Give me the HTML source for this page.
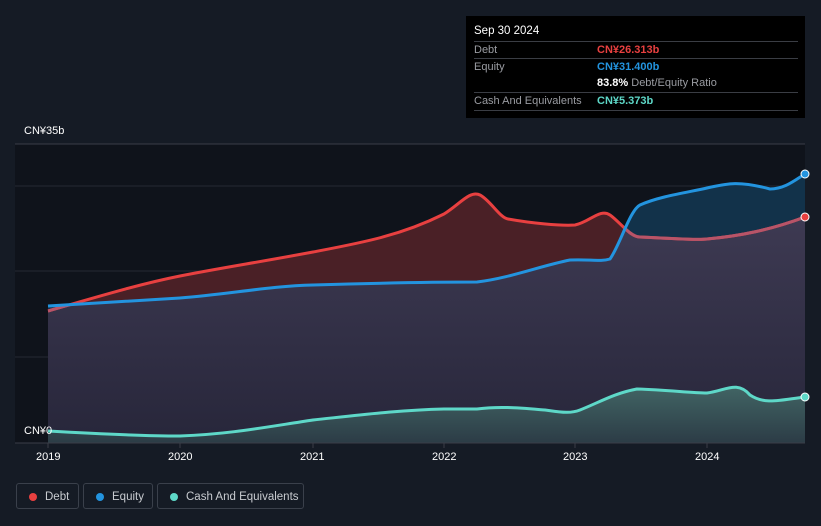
<!DOCTYPE html>
<html><head><style>
body{margin:0;width:821px;height:526px;background:#151b25;font-family:"Liberation Sans",sans-serif;overflow:hidden;position:relative}
.tt{position:absolute;left:466px;top:16px;width:339px;height:102px;background:#000;color:#fff;font-size:11px}
.tt .h{position:absolute;left:8px;top:9px;font-size:11.5px}
.row{position:absolute;left:8px;width:324px;border-top:1px solid #3a3d44;height:17px;line-height:17px;color:#9a9ca2}
.row span{position:absolute;left:123px;font-weight:bold}
.lg{position:absolute;top:483px;height:26px;border:1px solid #3a404b;border-radius:3px;color:#c8cbd0;font-size:11.5px;line-height:26px;box-sizing:border-box}
.lg i{position:absolute;top:9px;width:8px;height:8px;border-radius:50%;left:12px}
.ax{position:absolute;color:#fff;font-size:11px}
</style></head><body>
<svg width="821" height="526" style="position:absolute;left:0;top:0">
<defs>
<clipPath id="eq"><path d="M48,306 C120,302 150,300 180,298 C230,294 270,286 313,285 C380,283 420,282 477,282 C510,278 540,266 570,260 C590,259 600,262 610,259 C620,245 630,210 640,205 C660,196 690,192 707,188 C725,184 737,180 770,189 C785,189 795,180 805,174 L805,443 L48,443Z"/></clipPath>
<linearGradient id="pg" x1="0" y1="0" x2="0" y2="1"><stop offset="0" stop-color="#403c55"/><stop offset="1" stop-color="#27263a"/></linearGradient>
<linearGradient id="cg" x1="0" y1="0" x2="0" y2="1"><stop offset="0" stop-color="#416464"/><stop offset="1" stop-color="#2c3c46"/></linearGradient>
</defs>
<rect x="15" y="144" width="790" height="299" fill="#0f131b"/>
<line x1="15" y1="144" x2="805" y2="144" stroke="#3a3e48"/>
<line x1="15" y1="186" x2="805" y2="186" stroke="#262a33"/>
<line x1="15" y1="271" x2="805" y2="271" stroke="#262a33"/>
<line x1="15" y1="357" x2="805" y2="357" stroke="#262a33"/>
<path d="M48,306 C120,302 150,300 180,298 C230,294 270,286 313,285 C380,283 420,282 477,282 C510,278 540,266 570,260 C590,259 600,262 610,259 C620,245 630,210 640,205 C660,196 690,192 707,188 C725,184 737,180 770,189 C785,189 795,180 805,174 L805,443 L48,443Z" fill="#12324a"/>
<path id="dp" d="M48,311 C100,296 140,284 180,276 C220,268 260,262 313,252 C360,243 400,236 444,214 C460,204 470,190 480,195 C490,200 500,218 508,219 C530,223 560,226 575,225 C590,222 600,208 610,215 C620,222 630,237 640,237 C680,239 700,240 707,239 C740,236 770,230 805,217 L805,443 L48,443Z" fill="#4a2026"/>
<path d="M48,311 C100,296 140,284 180,276 C220,268 260,262 313,252 C360,243 400,236 444,214 C460,204 470,190 480,195 C490,200 500,218 508,219 C530,223 560,226 575,225 C590,222 600,208 610,215 C620,222 630,237 640,237 C680,239 700,240 707,239 C740,236 770,230 805,217 L805,443 L48,443Z" fill="url(#pg)" clip-path="url(#eq)"/>
<path d="M48,431 C100,434 150,436 180,436 C230,434 260,428 313,420 C360,415 400,410 444,409 L477,409 C500,406 520,408 545,410 C560,412 570,414 580,410 C600,402 615,393 637,389 C670,390 690,393 707,393 C725,391 737,380 750,395 C765,405 780,400 805,397 L805,443 L48,443Z" fill="url(#cg)"/>
<path d="M48,311 C100,296 140,284 180,276 C220,268 260,262 313,252 C360,243 400,236 444,214 C460,204 470,190 480,195 C490,200 500,218 508,219 C530,223 560,226 575,225 C590,222 600,208 610,215 C620,222 630,237 640,237 C680,239 700,240 707,239 C740,236 770,230 805,217" fill="none" stroke="#e84040" stroke-width="3"/>
<path d="M48,311 C100,296 140,284 180,276 C220,268 260,262 313,252 C360,243 400,236 444,214 C460,204 470,190 480,195 C490,200 500,218 508,219 C530,223 560,226 575,225 C590,222 600,208 610,215 C620,222 630,237 640,237 C680,239 700,240 707,239 C740,236 770,230 805,217" fill="none" stroke="#b85468" stroke-width="3" clip-path="url(#eq)"/>
<path d="M48,306 C120,302 150,300 180,298 C230,294 270,286 313,285 C380,283 420,282 477,282 C510,278 540,266 570,260 C590,259 600,262 610,259 C620,245 630,210 640,205 C660,196 690,192 707,188 C725,184 737,180 770,189 C785,189 795,180 805,174" fill="none" stroke="#2394df" stroke-width="3"/>
<path d="M48,431 C100,434 150,436 180,436 C230,434 260,428 313,420 C360,415 400,410 444,409 L477,409 C500,406 520,408 545,410 C560,412 570,414 580,410 C600,402 615,393 637,389 C670,390 690,393 707,393 C725,391 737,380 750,395 C765,405 780,400 805,397" fill="none" stroke="#5ed8c8" stroke-width="3"/>
<circle cx="805" cy="174" r="4" fill="#2394df" stroke="#fff"/>
<circle cx="805" cy="217" r="4" fill="#e84040" stroke="#fff"/>
<circle cx="805" cy="397" r="4" fill="#5ed8c8" stroke="#fff"/>
<line x1="15" y1="443" x2="805" y2="443" stroke="#3a3e48"/>
<g stroke="#3a3e48"><line x1="48" y1="443" x2="48" y2="448"/><line x1="180" y1="443" x2="180" y2="448"/><line x1="313" y1="443" x2="313" y2="448"/><line x1="444" y1="443" x2="444" y2="448"/><line x1="575" y1="443" x2="575" y2="448"/><line x1="707" y1="443" x2="707" y2="448"/></g>
</svg>
<div class="ax" style="left:24px;top:125px">CN¥35b</div>
<div class="ax" style="left:24px;top:425px">CN¥0</div>
<div class="ax" style="left:36px;top:451px">2019</div>
<div class="ax" style="left:168px;top:451px">2020</div>
<div class="ax" style="left:300px;top:451px">2021</div>
<div class="ax" style="left:432px;top:451px">2022</div>
<div class="ax" style="left:563px;top:451px">2023</div>
<div class="ax" style="left:695px;top:451px">2024</div>
<div class="tt">
<div class="h">Sep 30 2024</div>
<div class="row" style="top:25px">Debt<span style="color:#e84040">CN¥26.313b</span></div>
<div class="row" style="top:42px">Equity<span style="color:#2394df">CN¥31.400b</span></div>
<div class="row" style="top:59px;border-top:none"><span style="color:#fff">83.8% <b style="color:#9a9ca2;font-weight:normal">Debt/Equity Ratio</b></span></div>
<div class="row" style="top:76px">Cash And Equivalents<span style="color:#5ed8c8">CN¥5.373b</span></div>
<div class="row" style="top:94px;height:0"></div>
</div>
<div class="lg" style="left:16px;width:63px"><i style="background:#e84040"></i><span style="position:absolute;left:28px">Debt</span></div>
<div class="lg" style="left:83px;width:70px"><i style="background:#2394df"></i><span style="position:absolute;left:28px">Equity</span></div>
<div class="lg" style="left:157px;width:147px"><i style="background:#5ed8c8"></i><span style="position:absolute;left:28px">Cash And Equivalents</span></div>
</body></html>
